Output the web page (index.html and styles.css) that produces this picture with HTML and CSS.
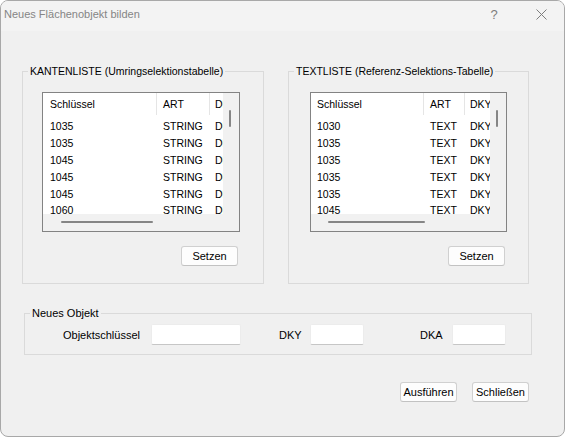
FILE: index.html
```html
<!DOCTYPE html>
<html lang="de">
<head>
<meta charset="utf-8">
<title>Neues Flächenobjekt bilden</title>
<link rel="stylesheet" href="styles.css">
</head>
<body>
<div class="window">
  <div class="titlebar">
    <span class="title">Neues Flächenobjekt bilden</span>
    <span class="tb-btn tb-help">?</span>
    <span class="tb-btn tb-close">
      <svg width="11" height="11" viewBox="0 0 11 11"><path d="M0.5 0.5 L10.5 10.5 M10.5 0.5 L0.5 10.5" stroke="#7d7d7d" stroke-width="1" fill="none"/></svg>
    </span>
  </div>
  <div class="content">
    <div class="lists">
      <fieldset class="group group-kanten">
        <legend>KANTENLISTE (Umringselektionstabelle)</legend>
        <div class="group-body">
          <div class="listbox lb-kanten">
            <div class="lb-view">
              <div class="lb-head"><span class="c1">Schlüssel</span><span class="c2">ART</span><span class="c3">DKY</span></div>
              <div class="lb-rows">
                <div class="lb-row"><span class="c1">1035</span><span class="c2">STRING</span><span class="c3">DKY</span></div>
                <div class="lb-row"><span class="c1">1035</span><span class="c2">STRING</span><span class="c3">DKY</span></div>
                <div class="lb-row"><span class="c1">1045</span><span class="c2">STRING</span><span class="c3">DKY</span></div>
                <div class="lb-row"><span class="c1">1045</span><span class="c2">STRING</span><span class="c3">DKY</span></div>
                <div class="lb-row"><span class="c1">1045</span><span class="c2">STRING</span><span class="c3">DKY</span></div>
                <div class="lb-row"><span class="c1">1060</span><span class="c2">STRING</span><span class="c3">DKY</span></div>
              </div>
            </div>
            <div class="vscroll"><span class="vthumb"></span></div>
            <div class="hscroll"><span class="hthumb"></span></div>
            <div class="corner"></div>
          </div>
          <button class="btn btn-set">Setzen</button>
        </div>
      </fieldset>
      <fieldset class="group group-text">
        <legend>TEXTLISTE (Referenz-Selektions-Tabelle)</legend>
        <div class="group-body">
          <div class="listbox lb-text">
            <div class="lb-view">
              <div class="lb-head"><span class="c1">Schlüssel</span><span class="c2">ART</span><span class="c3">DKY</span></div>
              <div class="lb-rows">
                <div class="lb-row"><span class="c1">1030</span><span class="c2">TEXT</span><span class="c3">DKY</span></div>
                <div class="lb-row"><span class="c1">1035</span><span class="c2">TEXT</span><span class="c3">DKY</span></div>
                <div class="lb-row"><span class="c1">1035</span><span class="c2">TEXT</span><span class="c3">DKY</span></div>
                <div class="lb-row"><span class="c1">1035</span><span class="c2">TEXT</span><span class="c3">DKY</span></div>
                <div class="lb-row"><span class="c1">1035</span><span class="c2">TEXT</span><span class="c3">DKY</span></div>
                <div class="lb-row"><span class="c1">1045</span><span class="c2">TEXT</span><span class="c3">DKY</span></div>
              </div>
            </div>
            <div class="vscroll"><span class="vthumb"></span></div>
            <div class="hscroll"><span class="hthumb"></span></div>
            <div class="corner"></div>
          </div>
          <button class="btn btn-set">Setzen</button>
        </div>
      </fieldset>
    </div>
    <fieldset class="group newobj">
      <legend>Neues Objekt</legend>
      <div class="newobj-row">
        <label class="lbl lbl-key" for="f-key">Objektschlüssel</label>
        <input class="field field-key" id="f-key" type="text">
        <label class="lbl lbl-dky" for="f-dky">DKY</label>
        <input class="field field-small" id="f-dky" type="text">
        <label class="lbl lbl-dka" for="f-dka">DKA</label>
        <input class="field field-small" id="f-dka" type="text">
      </div>
    </fieldset>
    <div class="actions">
      <button class="btn btn-run">Ausführen</button>
      <button class="btn btn-close">Schließen</button>
    </div>
  </div>
</div>
</body>
</html>
```
FILE: styles.css
```css
* { box-sizing: border-box; }

body {
  margin: 0;
  background: #ffffff;
  font-family: "Liberation Sans", Arial, sans-serif;
  font-size: 11px;
  color: #000;
}

.window {
  width: 565px;
  height: 437px;
  border: 1px solid #a8a8a8;
  border-radius: 8px;
  background: #f0f0f0;
  overflow: hidden;
  display: flex;
  flex-direction: column;
}

.titlebar {
  height: 30px;
  flex: none;
  display: flex;
  align-items: center;
  padding: 0 0 4px 3px;
  background: #f3f3f3;
}

.title {
  flex: 1;
  color: #858585;
  font-size: 11px;
}

.tb-btn {
  width: 46px;
  height: 20px;
  display: flex;
  align-items: center;
  justify-content: center;
  color: #7d7d7d;
}

.tb-help {
  font-size: 13px;
  margin-right: 1px;
}

.tb-close svg { display: block; }

.content {
  padding-left: 21px;
  display: flex;
  flex-direction: column;
}

.lists {
  display: flex;
  gap: 24px;
  margin-top: 33px;
}

.group {
  margin: 0;
  border: 1px solid #dadada;
  min-width: 0;
}

.group legend {
  margin-left: 5px;
  padding: 0 2px;
  line-height: 14px;
  font-size: 10.5px;
}

.group-kanten,
.group-text {
  width: 242px;
  padding: 14px 0 17px 0;
}

.group-text {
  width: 241px;
}

.group-body {
  width: 198px;
  margin-left: 19px;
  display: flex;
  flex-direction: column;
  align-items: flex-end;
}

.group-text .group-body {
  width: 197px;
  margin-left: 21px;
}

.listbox {
  width: 198px;
  height: 140px;
  border: 1px solid #838383;
  background: #ffffff;
  display: grid;
  grid-template-columns: 180px 16px;
  grid-template-rows: 121px 17px;
}

.listbox.lb-text {
  width: 197px;
  grid-template-columns: 179px 16px;
}

.lb-view {
  overflow: hidden;
  font-size: 10.5px;
  white-space: nowrap;
}

.lb-head {
  height: 25px;
  display: flex;
  line-height: 22px;
}

.lb-head span {
  height: 22px;
  border-right: 1px solid #e5e5e5;
}

.lb-head .c3 { border-right: 0; }

.lb-row {
  height: 16.9px;
  line-height: 16.9px;
  display: flex;
}

.c1, .c2, .c3 {
  flex: none;
  overflow: hidden;
}

.c1 { padding-left: 7px; width: 114px; }
.c2 { padding-left: 6px; width: 53px; }
.c3 { padding-left: 5px; width: 40px; }

.lb-text .c1 { padding-left: 6px; width: 113px; }
.lb-text .c2 { width: 41px; }

.vscroll,
.hscroll,
.corner {
  background: #f1f1f1;
}

.vscroll { padding: 17px 0 0 6px; }

.vthumb {
  display: block;
  width: 2px;
  height: 17px;
  background: #858585;
  border-radius: 1px;
}

.hscroll { padding: 7px 0 0 18px; }
.lb-text .hscroll { padding-left: 17px; }

.hthumb {
  display: block;
  width: 92px;
  height: 2px;
  background: #858585;
  border-radius: 1px;
}

.lb-text .hthumb { width: 97px; }

.btn {
  height: 20px;
  width: 57px;
  padding: 0;
  border: 1px solid #d0d0d0;
  border-bottom-color: #c2c2c2;
  border-radius: 3px;
  background: #fdfdfd;
  font-family: "Liberation Sans", Arial, sans-serif;
  font-size: 11px;
  color: #000;
}

.btn-set {
  margin-top: 14px;
  margin-right: 2px;
}

.newobj {
  width: 508px;
  margin-top: 22px;
  margin-left: 2px;
  padding: 4px 0 9px 0;
}

.newobj legend { font-size: 11px; }

.newobj-row {
  display: flex;
  align-items: center;
}

.lbl { flex: none; }

.lbl-key {
  width: 115px;
  text-align: right;
}

.field {
  height: 21px;
  border: 1px solid #ececec;
  border-bottom-color: #c6c6c6;
  border-radius: 2px;
  background: #ffffff;
  padding: 0 3px;
  font-family: "Liberation Sans", Arial, sans-serif;
  font-size: 11px;
}

.field-key {
  width: 90px;
  margin-left: 11px;
}

.lbl-dky {
  width: 31px;
  margin-left: 38px;
}

.field-small { width: 54px; }

.lbl-dka {
  width: 32px;
  margin-left: 56px;
}

.actions {
  display: flex;
  justify-content: flex-end;
  gap: 15px;
  margin-top: 27px;
  padding-right: 35px;
}
```
